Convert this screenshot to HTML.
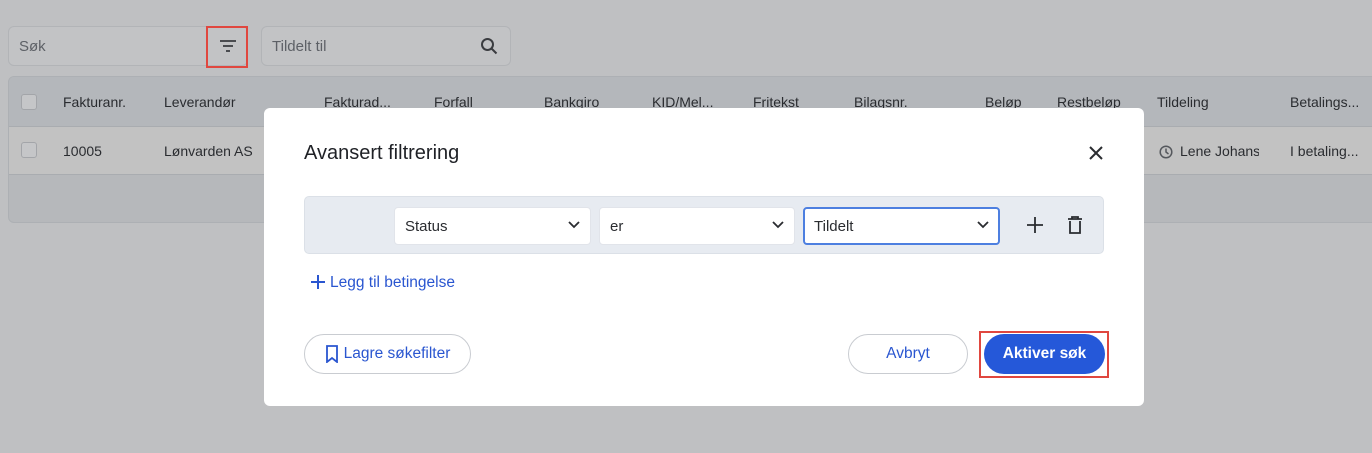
<!DOCTYPE html>
<html><head><meta charset="utf-8"><style>
*{box-sizing:border-box;margin:0;padding:0}
body{width:1372px;height:453px;background:#bfc0c2;font-family:"Liberation Sans",sans-serif;font-size:14px;color:#2a2c30;position:relative;overflow:hidden}
.abs{position:absolute}
.inp{position:absolute;top:26px;height:40px;border:1px solid #b2b4b7;border-radius:6px;background:#c2c3c5;color:#5d6066;font-size:15px;padding:11px 10px}
.table{position:absolute;left:8px;top:76px;width:1380px;height:147px;border:1px solid #adb0b4;border-radius:6px;overflow:hidden;background:#b6b8bb}
.hdr{position:absolute;left:0;top:0;right:0;height:50px;background:#b4b7bb;border-bottom:1px solid #a9acb0}
.row{position:absolute;left:0;top:50px;right:0;height:48px;background:#c2c2c2;border-bottom:1px solid #a9acb0}
.t{position:absolute;font-size:14px;color:#2a2c30;white-space:nowrap}
.cb{position:absolute;left:12px;width:16px;height:16px;border:1px solid #a3a5a9;border-radius:3px;background:#c5c6c8}
.modal{position:absolute;left:264px;top:108px;width:880px;height:298px;background:#fff;border-radius:6px}
.sel{position:absolute;top:10px;height:38px;background:#fff;border:1px solid #e1e4ea;border-radius:4px;font-size:15px;padding:10px 10px;color:#2a2c30}
.btn{position:absolute;height:40px;border-radius:20px;font-size:15.5px;display:flex;align-items:center;justify-content:center;font-weight:bold}
</style></head><body>
<div class="inp" style="left:8px;width:240px">Søk</div>
<div class="abs" style="left:206px;top:26px;width:42px;height:42px;border:2px solid #e0473f"></div>
<svg class="abs" style="left:219px;top:39px" width="18" height="14"><path d="M1 2h16M4 7h10M7 12h4" stroke="#3a3c40" stroke-width="1.8"/></svg>
<div class="inp" style="left:261px;width:250px">Tildelt til</div>
<svg class="abs" style="left:480px;top:37px" width="18" height="18"><circle cx="7.5" cy="7.5" r="5.5" fill="none" stroke="#3a3c40" stroke-width="2"/><path d="M11.5 11.5l5 5" stroke="#3a3c40" stroke-width="2"/></svg>
<div class="table">
<div class="hdr">
<div class="cb" style="top:17px"></div>
<div class="t" style="left:54px;top:17px">Fakturanr.</div>
<div class="t" style="left:155px;top:17px">Leverandør</div>
<div class="t" style="left:315px;top:17px">Fakturad...</div>
<div class="t" style="left:425px;top:17px">Forfall</div>
<div class="t" style="left:535px;top:17px">Bankgiro</div>
<div class="t" style="left:643px;top:17px">KID/Mel...</div>
<div class="t" style="left:744px;top:17px">Fritekst</div>
<div class="t" style="left:845px;top:17px">Bilagsnr.</div>
<div class="t" style="left:976px;top:17px">Beløp</div>
<div class="t" style="left:1048px;top:17px">Restbeløp</div>
<div class="t" style="left:1148px;top:17px">Tildeling</div>
<div class="t" style="left:1281px;top:17px">Betalings...</div>
</div>
<div class="row">
<div class="cb" style="top:15px"></div>
<div class="t" style="left:54px;top:16px">10005</div>
<div class="t" style="left:155px;top:16px">Lønvarden AS</div>
<svg class="abs" style="left:1150px;top:18px" width="14" height="14"><circle cx="7" cy="7" r="5.8" fill="none" stroke="#55585d" stroke-width="1.5"/><path d="M7 3.5V7l2.5 2" fill="none" stroke="#55585d" stroke-width="1.5"/></svg>
<div class="t" style="left:1171px;top:16px;width:79px;overflow:hidden">Lene Johansen</div>
<div class="t" style="left:1281px;top:16px">I betaling...</div>
</div>
</div>
<div class="modal">
<div class="t" style="left:40px;top:34px;font-size:20px;color:#1f2126">Avansert filtrering</div>
<svg class="abs" style="left:824px;top:37px" width="16" height="16"><path d="M2 2l12 12M14 2L2 14" stroke="#2a2c30" stroke-width="2"/></svg>
<div class="abs" style="left:40px;top:88px;width:800px;height:58px;background:#e7ebf1;border:1px solid #dbe0e7;border-radius:5px">
<div class="sel" style="left:89px;width:197px">Status</div>
<div class="sel" style="left:294px;width:196px">er</div>
<div class="sel" style="left:498px;width:197px;border:2px solid #4d7fe0;padding:9px 9px">Tildelt</div>
<svg class="abs" style="left:263px;top:24px" width="12" height="8"><path d="M1 1l5 5 5-5" fill="none" stroke="#2a2c30" stroke-width="1.8"/></svg>
<svg class="abs" style="left:467px;top:24px" width="12" height="8"><path d="M1 1l5 5 5-5" fill="none" stroke="#2a2c30" stroke-width="1.8"/></svg>
<svg class="abs" style="left:672px;top:24px" width="12" height="8"><path d="M1 1l5 5 5-5" fill="none" stroke="#2a2c30" stroke-width="1.8"/></svg>
<svg class="abs" style="left:722px;top:20px" width="16" height="16"><path d="M8 0v16M0 8h16" stroke="#2a2c30" stroke-width="1.8"/></svg>
<svg class="abs" style="left:762px;top:19px" width="16" height="18"><path d="M1 3h14M5 3V1h6v2M3 5v12h10V5" fill="none" stroke="#2a2c30" stroke-width="1.8"/></svg>
</div>
<svg class="abs" style="left:46px;top:166px" width="16" height="16"><path d="M8 1v14M1 8h14" stroke="#2a56d0" stroke-width="2"/></svg>
<div class="t" style="left:66px;top:166px;font-size:15.5px;color:#2a56d0">Legg til betingelse</div>
<div class="btn" style="left:40px;top:226px;width:167px;border:1px solid #c9ccd1;color:#2a56d0;font-weight:normal">
<svg width="14" height="18" style="margin-right:5px"><path d="M2 1h10v16l-5-4-5 4z" fill="none" stroke="#2a56d0" stroke-width="1.8"/></svg>Lagre søkefilter</div>
<div class="btn" style="left:584px;top:226px;width:120px;border:1px solid #c9ccd1;color:#2a56d0;font-weight:normal">Avbryt</div>
<div class="abs" style="left:715px;top:223px;width:130px;height:47px;border:2px solid #e0473f"></div>
<div class="btn" style="left:720px;top:226px;width:121px;background:#2558d9;color:#fff">Aktiver søk</div>
</div>
</body></html>
